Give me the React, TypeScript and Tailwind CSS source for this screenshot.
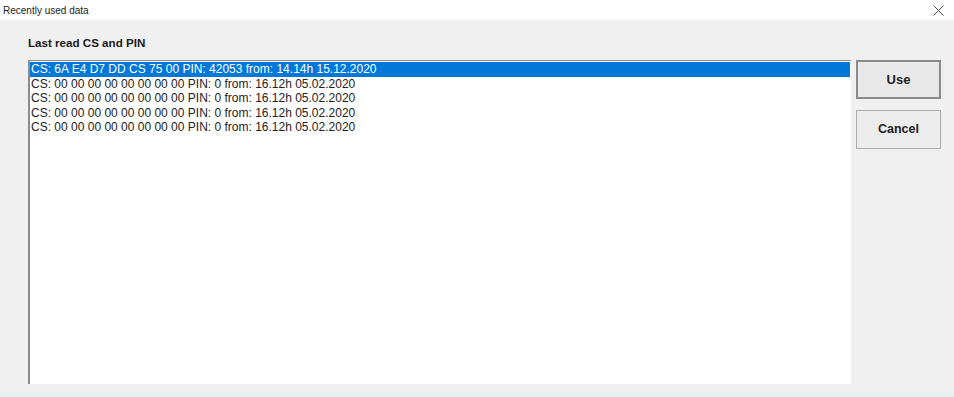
import React, { useState } from 'react';

const rows = [
  'CS: 6A E4 D7 DD CS 75 00 PIN: 42053 from: 14.14h 15.12.2020',
  'CS: 00 00 00 00 00 00 00 00 PIN: 0 from: 16.12h 05.02.2020',
  'CS: 00 00 00 00 00 00 00 00 PIN: 0 from: 16.12h 05.02.2020',
  'CS: 00 00 00 00 00 00 00 00 PIN: 0 from: 16.12h 05.02.2020',
  'CS: 00 00 00 00 00 00 00 00 PIN: 0 from: 16.12h 05.02.2020',
];

const App: React.FC = () => {
  const [selected, setSelected] = useState(0);

  return (
    <div className="w-[954px] h-[397px] flex flex-col bg-[#f0f0f0] font-['Liberation_Sans',Arial,sans-serif] overflow-hidden">
      {/* Title bar */}
      <div className="h-[20px] bg-white flex items-center justify-between pl-[3px] pr-[10px] shrink-0">
        <span className="text-[10px] text-[#222]">Recently used data</span>
        <svg width="11" height="11" viewBox="0 0 11 11" className="text-[#555]">
          <path d="M0.5 0.5 L10.5 10.5 M10.5 0.5 L0.5 10.5" stroke="currentColor" strokeWidth="1" />
        </svg>
      </div>

      {/* Body */}
      <div className="flex-1 flex flex-col pl-[28px] pt-[16px]">
        <div className="text-[11.6px] font-bold text-[#1a1a1a] leading-[14px] mb-[10px]">Last read CS and PIN</div>
        <div className="flex gap-[5px] flex-1">
          <div className="w-[823px] h-[324px] bg-white border-l-[2px] border-t border-[#8c8c8c] border-r-0 border-b-0 pt-[1px] pr-[1px]">
            {rows.map((row, i) => (
              <div
                key={i}
                onClick={() => setSelected(i)}
                className={
                  i === selected
                    ? 'h-[14.5px] leading-[14.5px] pl-[1px] text-[12px] bg-[#0078d7] text-white whitespace-nowrap'
                    : 'h-[14.5px] leading-[14.5px] pl-[1px] text-[12px] text-[#222] whitespace-nowrap'
                }
              >
                {row}
              </div>
            ))}
          </div>
          <div className="flex flex-col gap-[11px]">
            <button className="w-[85px] h-[39px] bg-[#e8e8e8] border-2 border-[#8a8a8a] text-[13px] font-bold text-[#222]">
              Use
            </button>
            <button className="w-[85px] h-[39px] bg-[#ececec] border border-[#adadad] text-[12.5px] font-bold text-[#222]">
              Cancel
            </button>
          </div>
        </div>
      </div>
      <div className="h-[3px] bg-[#dff3f7] shrink-0" />
    </div>
  );
};

export default App;
